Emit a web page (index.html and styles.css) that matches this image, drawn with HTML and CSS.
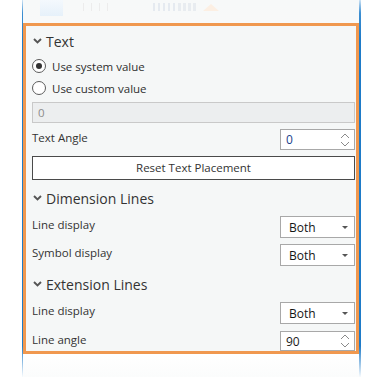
FILE: index.html
```html
<!DOCTYPE html>
<html>
<head>
<meta charset="utf-8">
<link rel="stylesheet" href="styles.css">
</head>
<body>
<div class="frame">
  <div class="toolbar">
    <span class="tb-sel"></span>
    <span class="tb-dots d1"></span>
    <span class="tb-dots d2"></span>
    <span class="tb-dots d3"></span>
    <span class="tb-tri"></span>
  </div>
  <div class="panel">
    <div class="sec-head">
      <svg class="chev" width="9" height="6" viewBox="0 0 9 6"><path d="M1 1 L4.5 4.5 L8 1" fill="none" stroke="#555" stroke-width="1.9"/></svg>
      <span>Text</span>
    </div>
    <label class="radio"><span class="dot checked"></span><span>Use system value</span></label>
    <label class="radio"><span class="dot"></span><span>Use custom value</span></label>
    <div class="textbox">0</div>
    <div class="row">
      <span class="lbl">Text Angle</span>
      <div class="spin"><span class="val">0</span>
        <svg class="arrows" width="10" height="16" viewBox="0 0 10 16"><path d="M1 6 L5 2 L9 6" fill="none" stroke="#8a8a8a" stroke-width="1"/><path d="M1 10 L5 14 L9 10" fill="none" stroke="#8a8a8a" stroke-width="1"/></svg>
      </div>
    </div>
    <div class="button">Reset Text Placement</div>
    <div class="sec-head">
      <svg class="chev" width="9" height="6" viewBox="0 0 9 6"><path d="M1 1 L4.5 4.5 L8 1" fill="none" stroke="#555" stroke-width="1.9"/></svg>
      <span>Dimension Lines</span>
    </div>
    <div class="row r-dd">
      <span class="lbl">Line display</span>
      <div class="dd"><span class="val">Both</span><span class="caret"></span></div>
    </div>
    <div class="row r-dd">
      <span class="lbl">Symbol display</span>
      <div class="dd"><span class="val">Both</span><span class="caret"></span></div>
    </div>
    <div class="sec-head">
      <svg class="chev" width="9" height="6" viewBox="0 0 9 6"><path d="M1 1 L4.5 4.5 L8 1" fill="none" stroke="#555" stroke-width="1.9"/></svg>
      <span>Extension Lines</span>
    </div>
    <div class="row r-dd">
      <span class="lbl">Line display</span>
      <div class="dd"><span class="val">Both</span><span class="caret"></span></div>
    </div>
    <div class="row r-last">
      <span class="lbl">Line angle</span>
      <div class="spin short"><span class="val">90</span>
        <svg class="arrows" width="10" height="16" viewBox="0 0 10 16"><path d="M1 6 L5 2 L9 6" fill="none" stroke="#8a8a8a" stroke-width="1"/><path d="M1 10 L5 14 L9 10" fill="none" stroke="#8a8a8a" stroke-width="1"/></svg>
      </div>
    </div>
  </div>
  <div class="footer"></div>
</div>
</body>
</html>
```

FILE: styles.css
```css
html, body {
  margin: 0;
  padding: 0;
  background: #ffffff;
}
body {
  width: 380px;
  height: 377px;
  overflow: hidden;
  font-family: "Open Sans", "Noto Sans", sans-serif;
  color: #3a3a3a;
}
.frame {
  margin-left: 22px;
  width: 336px;
  height: 377px;
  border-left: 1px solid #1e7bc8;
  border-right: 2px solid #1e7bc8;
  border-image: linear-gradient(to bottom, #d8e9f7 0px, #3d8fd2 14px, #1e7bc8 40px, #1e7bc8 345px, #ffffff 377px) 1;
  background: linear-gradient(to bottom, #f7f9f9 0px, #f8f9f9 22px);
  display: flex;
  flex-direction: column;
}
.toolbar {
  height: 23px;
  position: relative;
  flex: none;
}
.tb-sel {
  position: absolute;
  left: 17px;
  top: 0;
  width: 23px;
  height: 16px;
  background: linear-gradient(to bottom, #f4f9fd, #e6f1fa);
}
.tb-dots {
  position: absolute;
  top: 3px;
  height: 8px;
  width: 30px;
  background: repeating-linear-gradient(to right, #ececec 0 1px, transparent 1px 8px);
}
.d1 { left: 60px; }
.d2 { left: 130px; width: 22px; background: repeating-linear-gradient(to right, #e5eaf0 0 2px, transparent 2px 5px); }
.d3 { left: 155px; width: 18px; background: repeating-linear-gradient(to right, #e8ecf0 0 3px, transparent 3px 5px); }
.tb-tri {
  position: absolute;
  left: 180px;
  top: 4px;
  width: 0;
  height: 0;
  border-left: 8px solid transparent;
  border-right: 8px solid transparent;
  border-bottom: 7px solid #fcefe3;
}
.panel {
  flex: none;
  border: 3px solid #f0984f;
  background: #f5f7f7;
  padding: 0 1px 0 6px;
  display: flex;
  flex-direction: column;
}
.sec-head {
  margin-top: 3px;
  height: 24px;
  display: flex;
  align-items: center;
  font-size: 14px;
  color: #333;
  font-weight: 400;
}
.sec-head + .radio { margin-top: 2px; }
.panel > .sec-head ~ .sec-head { margin-top: 6px; }
.chev {
  margin-left: 1px;
  margin-right: 4px;
}
.radio {
  height: 22px;
  display: flex;
  align-items: center;
  font-size: 11.5px;
  color: #2f2f2f;
}
.dot {
  width: 12px;
  height: 12px;
  border: 1px solid #5c5c5c;
  border-radius: 50%;
  background: #fff;
  margin-right: 6px;
  box-sizing: content-box;
  display: flex;
  align-items: center;
  justify-content: center;
}
.dot.checked::after {
  content: "";
  width: 6px;
  height: 6px;
  border-radius: 50%;
  background: #333;
}
.textbox {
  margin-top: 3px;
  height: 21px;
  box-sizing: border-box;
  border: 1px solid #c9c9c9;
  background: #eceeef;
  color: #8c8c8c;
  font-size: 11.5px;
  line-height: 19px;
  padding-left: 5px;
}
.row {
  margin-top: 6px;
  display: flex;
  justify-content: space-between;
  align-items: flex-start;
}
.lbl {
  font-size: 11.5px;
  line-height: 17px;
  color: #333;
}
.spin, .dd {
  width: 75px;
  height: 21px;
  box-sizing: border-box;
  border: 1px solid #a8a8a8;
  background: #fff;
  display: flex;
  align-items: center;
  justify-content: space-between;
  padding: 0 4px 0 5px;
  font-size: 12px;
  color: #1a1a1a;
}
.spin .val { color: #1c3f8c; }
.spin.short .val { color: #1a1a1a; }
.dd { height: 22px; padding-left: 8px; padding-right: 6px; }
.dd .val { color: #151515; }
.caret {
  width: 0;
  height: 0;
  border-left: 3px solid transparent;
  border-right: 3px solid transparent;
  border-top: 3px solid #555;
}
.button {
  margin-top: 6px;
  height: 24px;
  box-sizing: border-box;
  border: 1px solid #4a4a4a;
  background: #fff;
  text-align: center;
  font-size: 11.5px;
  line-height: 22px;
  color: #333;
}
.r-dd + .r-dd { margin-top: 6px; }
.r-last { margin-top: 7px; }
.spin.short { height: 20px; }
.footer {
  flex: 1;
  background: linear-gradient(to bottom, #ffffff, #fbfcfc);
}
```
